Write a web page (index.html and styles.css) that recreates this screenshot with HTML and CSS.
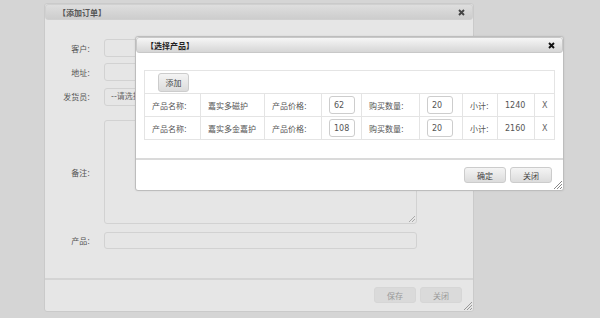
FILE: index.html
```html
<!DOCTYPE html>
<html>
<head>
    <title>添加订单</title>
    <link rel="stylesheet" href="styles.css">
</head>
<body>
    <!-- background dialog (dimmed by the modal one) -->
    <div class="dlg dlg-order">
        <div class="dlg-title">
            <span>【添加订单】</span>
            <svg class="close" width="7" height="7" viewBox="0 0 7 7"><path d="M1 1L6 6M6 1L1 6" stroke="#444" stroke-width="1.9"/></svg>
        </div>
        <div class="dlg-body">
            <div class="order-form">
                <label>客户:</label><input type="text" class="field">
                <label>地址:</label><input type="text" class="field">
                <label>发货员:</label><div class="field select">--请选择...</div>
                <label class="note-label">备注:</label><div class="field note"><svg class="grip" width="7" height="7" viewBox="0 0 7 7"><path d="M7 1L1 7M7 4L4 7" stroke="#aaa" stroke-width="1"/></svg></div>
                <label>产品:</label><input type="text" class="field">
            </div>
        </div>
        <div class="dlg-foot">
            <button class="btn">保存</button>
            <button class="btn">关闭</button>
            <svg class="grip foot-grip" width="8" height="8" viewBox="0 0 8 8"><path d="M8 0L0 8M8 3L3 8M8 6L6 8" stroke="#999" stroke-width="1"/></svg>
        </div>
    </div>

    <!-- modal: product picker -->
    <div class="dlg dlg-product">
        <div class="dlg-title">
            <span>【选择产品】</span>
            <svg class="close" width="7" height="7" viewBox="0 0 7 7"><path d="M1 1L6 6M6 1L1 6" stroke="#111" stroke-width="1.9"/></svg>
        </div>
        <div class="dlg-body">
            <table class="items">
                <colgroup>
                    <col style="width:56px"><col style="width:64px"><col style="width:57px">
                    <col style="width:40px"><col style="width:58px"><col style="width:43px">
                    <col style="width:35px"><col style="width:37px"><col style="width:20px">
                </colgroup>
                <tr class="add-row">
                    <td colspan="9"><button class="btn btn-add">添加</button></td>
                </tr>
                <tr>
                    <td>产品名称:</td><td>嘉实多磁护</td><td>产品价格:</td>
                    <td><input type="text" class="num" value="62"></td>
                    <td>购买数量:</td>
                    <td><input type="text" class="num" value="20"></td>
                    <td>小计:</td><td class="digits">1240</td><td class="del">X</td>
                </tr>
                <tr>
                    <td>产品名称:</td><td>嘉实多金嘉护</td><td>产品价格:</td>
                    <td><input type="text" class="num" value="108"></td>
                    <td>购买数量:</td>
                    <td><input type="text" class="num" value="20"></td>
                    <td>小计:</td><td class="digits">2160</td><td class="del">X</td>
                </tr>
            </table>
        </div>
        <div class="dlg-foot">
            <button class="btn">确定</button>
            <button class="btn">关闭</button>
            <svg class="grip foot-grip" width="8" height="8" viewBox="0 0 8 8"><path d="M8 0L0 8M8 3L3 8M8 6L6 8" stroke="#888" stroke-width="1"/></svg>
        </div>
    </div>
</body>
</html>
```

FILE: styles.css
```css
body {
    margin: 0;
    background: #d5d5d5;
    font-family: "DejaVu Sans", "Noto Sans CJK SC", sans-serif;
    font-size: 8px;
    color: #555;
}
.dlg {
    position: absolute;
    display: flex;
    flex-direction: column;
    box-sizing: border-box;
    border: 1px solid #c9c9c9;
    border-radius: 3px;
}
.dlg-title {
    display: flex;
    align-items: center;
    justify-content: space-between;
    height: 16px;
    box-sizing: border-box;
    border: 1px solid #c8c8c8;
    border-radius: 3px;
    font-weight: bold;
}
.dlg-body {
    flex: 1;
}
.dlg-foot {
    position: relative;
    display: flex;
    justify-content: flex-end;
    gap: 4px;
    border-top: 2px solid #d2d2d2;
}
.btn {
    box-sizing: border-box;
    width: 42px;
    height: 16px;
    padding: 0;
    font-family: inherit;
    font-size: 8px;
    border: 1px solid #cfcfcf;
    border-radius: 3px;
}
.grip {
    position: absolute;
    right: 1px;
    bottom: 1px;
}

/* background dialog */
.dlg-order {
    left: 44px;
    top: 3px;
    width: 430px;
    height: 309px;
    background: #e6e6e6;
    border-color: #cacaca;
}
.dlg-order .dlg-title {
    background: linear-gradient(#dedede, #cdcdcd);
    padding: 0 7px 0 12px;
    color: #555;
    border-color: #d0d0d0;
}
.order-form {
    display: grid;
    grid-template-columns: 45px 313px;
    column-gap: 14px;
    row-gap: 6px;
    padding-top: 19px;
    align-items: center;
}
.order-form label {
    text-align: right;
    color: #555;
}
.field {
    box-sizing: border-box;
    height: 18px;
    margin: 0;
    border: 1px solid #d2d2d2;
    border-radius: 3px;
    background: #e6e6e6;
}
.select {
    margin-top: 1px;
    padding-left: 6px;
    line-height: 16px;
    color: #666;
}
.note {
    position: relative;
    height: 104px;
    margin: 8px 0 2px;
}
.note-label {
    margin-top: 6px;
}
.order-form .field:last-child {
    height: 17px;
}
.dlg-order .dlg-foot {
    height: 33px;
    padding: 7px 11px 0 0;
    box-sizing: border-box;
    border-top-color: #d4d4d4;
}
.dlg-order .btn {
    background: #dadada;
    color: #999;
    border-color: #d6d6d6;
}

/* product picker */
.dlg-product {
    left: 135px;
    top: 36px;
    width: 429px;
    height: 155px;
    background: #fff;
    border-color: #bdbdbd;
    box-shadow: 0 0 2px rgba(0,0,0,0.1);
}
.dlg-product .dlg-title {
    background: linear-gradient(#f6f6f6, #d6d6d6);
    padding: 0 7px 0 9px;
    color: #222;
}
.dlg-product .dlg-body {
    padding: 17px 0 0 8px;
}
.items {
    border-collapse: collapse;
    table-layout: fixed;
    width: 410px;
    color: #555;
}
.items td {
    height: 22px;
    padding: 0 0 0 7px;
    border: 1px solid #e4e4e4;
    white-space: nowrap;
    overflow: hidden;
}
.items .add-row td {
    padding-left: 13px;
}
.btn-add {
    width: 31px;
    height: 19px;
    margin-top: 1px;
    background: linear-gradient(#fafafa, #e2e2e2);
    color: #444;
}
.num {
    box-sizing: border-box;
    width: 26px;
    height: 18px;
    padding: 0 0 0 4px;
    font-family: inherit;
    font-size: 8px;
    color: #555;
    border: 1px solid #cdcdcd;
    border-radius: 3px;
    display: block;
}
.digits {
    color: #555;
}
.del {
    color: #666;
}
.dlg-product .dlg-foot {
    height: 32px;
    padding: 7px 11px 0 0;
    box-sizing: border-box;
    border-top-color: #dadada;
}
.dlg-product .btn {
    background: linear-gradient(#f4f4f4, #dcdcdc);
    color: #444;
    border-color: #cccccc;
}
```
